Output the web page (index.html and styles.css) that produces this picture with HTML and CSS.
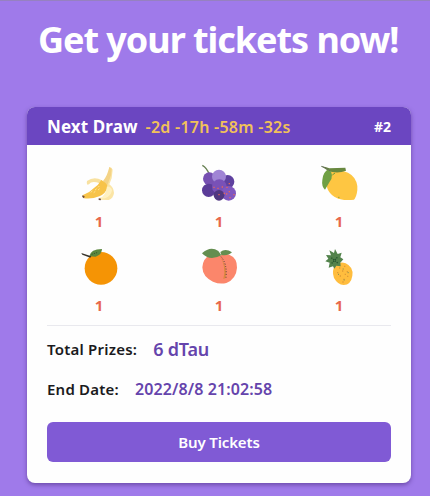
FILE: index.html
```html
<!DOCTYPE html>
<html lang="en">
<head>
<meta charset="utf-8">
<title>Tickets</title>
<link rel="stylesheet" href="styles.css">
</head>
<body>
<main class="page">
<h1 class="title">Get your tickets now!</h1>
<section class="card">
<header class="card-header">
<h2 class="draw">Next Draw</h2>
<span class="countdown">-2d -17h -58m -32s</span>
<span class="number">#2</span>
</header>
<div class="card-body">
<div class="fruits">
<div class="fruit">
<svg class="icon" viewBox="27 21 120 120">
<path d="M118 36q7 0 10 8l-3 26-7 18q13 9 14 26-2 16-16 21l-27-1-2-5 24-5-2-33z" fill="#fbe5a5"/>
<path d="M96 76Q72 63 51 78q-2 7 1 11l5-1q8-12 32-3z" fill="#f8e1a0"/>
<path d="M118 36l7 5q0 20-7 34l-7 18-12-15q13-15 19-42z" fill="#f4d385"/>
<path d="M94 75q16 8 19 20-5 20-25 29-22 9-46 6l-5-5 2-5q19-6 32-20 14-9 23-25z" fill="#f7c349"/>
<path d="M111 94q13 2 15 12-3 18-21 24l-18 2q21-9 24-38z" fill="#fff1c2"/>
<path d="M62 112l5-4m4 5l5-4m-1-4l5-4m4 4l5-4m-5-4l4-4" stroke="#fff0bd" stroke-width="2"/>
<path d="M37 121l7 3-2 6-5-4zM86 130l7 1-1 5-6-1z" fill="#674742"/>
</svg>
<span class="count">1</span>
</div>
<div class="fruit">
<svg class="icon" viewBox="30 21 120 120">
<path d="M40 31q13 7 21 27" fill="none" stroke="#688052" stroke-width="4"/>
<path d="M60 65l55 8 10 40-30 15-40-18z" fill="#6a48a8"/>
<circle cx="61" cy="71" r="19" fill="#7650b2"/>
<circle cx="116" cy="80" r="20" fill="#5f419f"/>
<circle cx="90" cy="65" r="21" fill="#a084d5"/>
<circle cx="59" cy="106" r="20" fill="#5b3c98"/>
<circle cx="91" cy="95" r="22" fill="#7951b7"/>
<circle cx="119" cy="115" r="22" fill="#8057bf"/>
<circle cx="90" cy="121" r="16" fill="#513780"/>
<path d="M75 95v4m12-1v4m13-8v4m14-3v4m7 9v4m-8 3v4m22-2v4m-12 5v4m-17-17v4m-16 0v4m31-37v4" stroke="#e6655b" stroke-width="4"/>
</svg>
<span class="count">1</span>
</div>
<div class="fruit">
<svg class="icon" viewBox="27 21 120 120">
<path d="M65 45q24-4 49 8 24 12 28 40 1 22-7 37l-3 4q-36 5-59-9Q42 104 52 68z" fill="#fec642"/>
<path d="M34 34q13 1 24 6l48-2 2 9q-20 8-41 4l-12-3z" fill="#68883f"/>
<path d="M57 41q17 20 2 39-7 12-14 24-11-10-8-29 1-24 20-34z" fill="#70a044"/>
<path d="M34 34q13 3 27 14" fill="none" stroke="#66705c" stroke-width="3"/>
<path d="M67 60l8-6M85 127h3" stroke="#6d983c" stroke-width="3"/>
</svg>
<span class="count">1</span>
</div>
<div class="fruit">
<svg class="icon" viewBox="27 18 120 120">
<circle cx="93" cy="85" r="49" fill="#f59405"/>
<path d="M58 49q4-22 38-22 0 16-19 23z" fill="#5b873d"/>
<path d="M34 39l30 10-3 4-24-9z" fill="#39342b"/>
<path d="M65 43l19-6" stroke="#354c2b" stroke-width="3" stroke-dasharray="3 4"/>
</svg>
<span class="count">1</span>
</div>
<div class="fruit">
<svg class="icon" viewBox="27 18 120 120">
<path d="M88 48q14-10 30-4 24 10 23 39-2 33-32 46-20 5-40-4-31-14-32-43 2-28 22-35 18-5 29 1z" fill="#fb866b"/>
<path d="M88 47q25 30 19 67l-7 3q10-41-12-70z" fill="#db873e"/>
<path d="M93 50q19 21 15 63" fill="none" stroke="#493b34" stroke-width="3" stroke-dasharray="3 5"/>
<path d="M36 40q25-23 49-7l9 13q-35 19-58-6zM91 36q15-13 35 1-12 12-32 8z" fill="#648e50"/>
</svg>
<span class="count">1</span>
</div>
<div class="fruit">
<svg class="icon" viewBox="27 18 120 120">
<path d="M76 75q14-12 31-5 24 11 20 37-4 27-26 28-18-1-29-21-8-22 4-39z" fill="#ffbd3e"/>
<path d="M48 45l15 1-5-15 14 8 3-12 8 15 12-4-4 14 9 6-9 10 1 11-13-2-6 9-4-7-13 4 3-15-13-4 9-8z" fill="#53834c"/>
<path d="M64 53l19 16M82 52L65 70" stroke="#25542f" stroke-width="4" stroke-dasharray="4 3"/>
<path d="M87 84h4m11-5h4m-25 19h4m11-5h4m10 2h4m-25 13h4m11-5h4m-8 15h4m7-9h4m-18 17h4" stroke="#e19a35" stroke-width="4"/>
<path d="M84 103h3m11-16h3m12 11h3m-15 22h3" stroke="#7b8c50" stroke-width="3"/>
</svg>
<span class="count">1</span>
</div>
</div>
<div class="row"><span class="label">Total Prizes:</span><span class="prize">6 dTau</span></div>
<div class="row"><span class="label end">End Date:</span><span class="date">2022/8/8 21:02:58</span></div>
<button class="buy" type="button">Buy Tickets</button>
</div>
</section>
</main>
</body>
</html>
```
FILE: styles.css
```css
* { box-sizing: border-box; }
body {
  margin: 0;
  background: #9f7aea;
  color: #1a1a20;
  font-family: "Noto Sans", "Open Sans", sans-serif;
}
.page {
  height: 496px;
  padding: 15px 19px 0 27px;
  border-top: 1px solid #9681c0;
  overflow: hidden;
}
.title {
  height: 48px;
  margin: 0 0 43px 11px;
  color: #fff;
  font-size: 36px;
  font-weight: 700;
  line-height: 48px;
  letter-spacing: -1.05px;
  white-space: nowrap;
}
.card {
  height: 376px;
  border-radius: 8px;
  background: #fefefe;
  box-shadow: 0 2px 4px rgba(60, 30, 110, .5);
}
.card-header {
  display: flex;
  align-items: center;
  height: 38px;
  padding: 1px 20px 0;
  border-radius: 8px 8px 0 0;
  background: #6b46c1;
  color: #fff;
  white-space: nowrap;
}
.draw { margin: 0 8px 0 0; font-size: 17px; font-weight: 700; letter-spacing: .1px; }
.countdown { color: #f1c15a; font-size: 16px; font-weight: 600; letter-spacing: .25px; }
.number { margin-left: auto; font-size: 14px; font-weight: 700; }
.card-body { padding: 17px 20px 0; }
.fruits {
  display: grid;
  grid-template-columns: repeat(3, 1fr);
  grid-auto-rows: 84px;
  column-gap: 16px;
  height: 164px;
  border-bottom: 1px solid #e9e9ee;
}
.fruit { display: flex; flex-direction: column; align-items: center; }
.icon { display: block; width: 40px; height: 40px; }
.count { height: 38px; color: #e8674c; font-size: 15px; font-weight: 700; line-height: 38px; }
.row {
  display: flex;
  align-items: center;
  height: 40px;
  gap: 16px;
  padding-top: 5px;
  font-size: 15px;
  font-weight: 600;
  white-space: nowrap;
}
.label { letter-spacing: .22px; }
.prize { color: #6544ac; font-size: 18px; letter-spacing: -.2px; }
.date { color: #6544ac; font-size: 16px; letter-spacing: .1px; }
.buy {
  display: block;
  width: 100%;
  height: 40px;
  margin-top: 16px;
  padding: 0;
  border: 0;
  border-radius: 6px;
  background: #805ad5;
  color: #fff;
  font: 600 15px/40px "Noto Sans", "Open Sans", sans-serif;
  letter-spacing: -.15px;
}
```
